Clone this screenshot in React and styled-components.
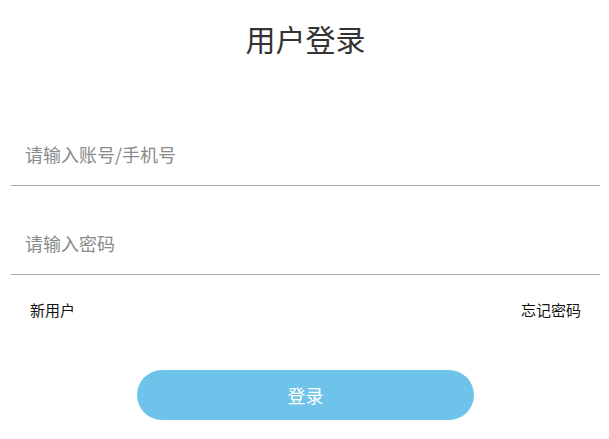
import React from "react";
import styled, { createGlobalStyle } from "styled-components";

const Global = createGlobalStyle`
  html, body { margin: 0; padding: 0; background: #fff; }
  body { font-family: "Noto Sans CJK SC", "Microsoft YaHei", sans-serif; }
  * { box-sizing: border-box; }
`;

const Page = styled.div`
  margin: 0 9px 0 11px;
  display: flex;
  flex-direction: column;
`;

const Title = styled.h1`
  margin: 17px 0 0;
  font-size: 30px;
  line-height: 42px;
  font-weight: 400;
  color: #333;
  text-align: center;
`;

const Form = styled.form`
  display: flex;
  flex-direction: column;
  margin-top: 67px;
  gap: 29px;
`;

const Field = styled.input`
  display: block;
  width: 100%;
  height: 60px;
  border: none;
  border-bottom: 1px solid #a9a9a9;
  padding: 0 14px 3px;
  font-family: inherit;
  font-size: 18px;
  color: #333;
  background: transparent;
  outline: none;
  &::placeholder { color: #8a8a8a; }
`;

const Links = styled.div`
  display: flex;
  justify-content: space-between;
  padding: 0 19px;
  margin-top: -4px;
`;

const LinkText = styled.a`
  font-size: 15px;
  line-height: 20px;
  color: #111;
  text-decoration: none;
  cursor: pointer;
`;

const Submit = styled.button`
  align-self: center;
  width: 337px;
  height: 50px;
  margin-top: 21px;
  border: none;
  border-radius: 25px;
  background: #6ec3ea;
  color: #fff;
  font-family: inherit;
  font-size: 18px;
  cursor: pointer;
`;

export default function App() {
  return (
    <>
      <Global />
      <Page>
        <Title>用户登录</Title>
        <Form onSubmit={(e) => e.preventDefault()}>
          <Field type="text" placeholder="请输入账号/手机号" />
          <Field type="password" placeholder="请输入密码" />
          <Links>
            <LinkText>新用户</LinkText>
            <LinkText>忘记密码</LinkText>
          </Links>
          <Submit type="submit">登录</Submit>
        </Form>
      </Page>
    </>
  );
}
